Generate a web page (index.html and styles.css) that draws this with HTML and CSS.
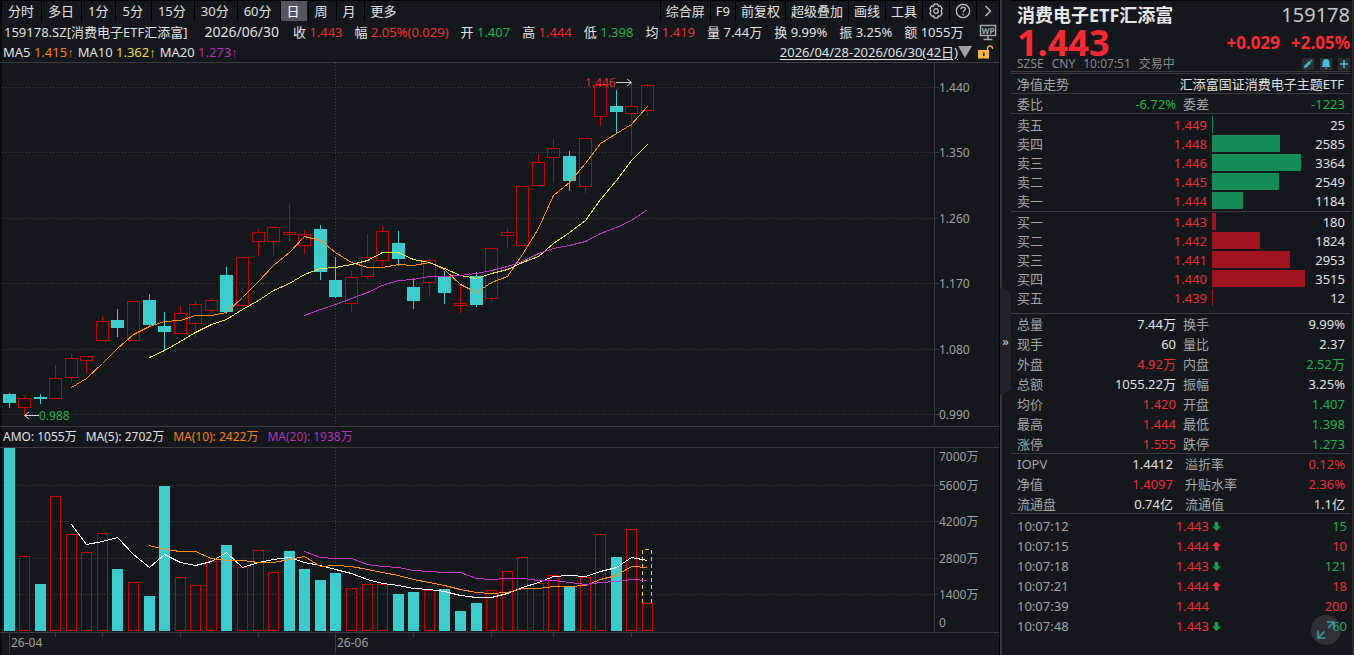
FILE: index.html
```
<!DOCTYPE html>
<html lang="zh-CN">

<head>
    <meta charset="UTF-8">
    <meta name="viewport" content="width=device-width, initial-scale=1.0">
    <title>消费电子ETF汇添富 159178</title>
    <link rel="stylesheet" href="styles.css">
</head>

<body>
    <main class="chart-panel">
        <nav class="toolbar">
            <button class="period">分时</button>
            <button class="period">多日</button>
            <button class="period">1分</button>
            <button class="period">5分</button>
            <button class="period">15分</button>
            <button class="period">30分</button>
            <button class="period">60分</button>
            <button class="period active">日</button>
            <button class="period">周</button>
            <button class="period">月</button>
            <button class="period">更多</button>
            <span class="spacer"></span>
            <button class="tool">综合屏</button>
            <button class="tool">F9</button>
            <button class="tool">前复权</button>
            <button class="tool">超级叠加</button>
            <button class="tool">画线</button>
            <button class="tool">工具</button>
            <button class="tool" aria-label="设置">
                <svg width="16" height="16" viewBox="0 0 16 16" fill="none" stroke="#c8c8c8" stroke-width="1.2">
                    <path d="M6.3 1.2h3.4l.7 1.9 1.9-.2 1.9 2.9-1.2 2.2 1.2 2.2-1.9 2.9-1.9-.2-.7 1.9H6.3l-.7-1.9-1.9.2-1.9-2.9L3 8 1.8 5.8l1.9-2.9 1.9.2z" />
                    <circle cx="8" cy="8" r="2.3" />
                </svg>
            </button>
            <button class="tool" aria-label="帮助">
                <svg width="16" height="16" viewBox="0 0 16 16" fill="none" stroke="#c8c8c8" stroke-width="1.2">
                    <circle cx="8" cy="8" r="6.7" />
                    <path d="M5.8 6.3c0-3 4.5-2.8 4.5-.2 0 1.5-2.2 1.6-2.2 3.3M8.1 10.8v1.4" />
                </svg>
            </button>
            <button class="tool" aria-label="展开">
                <svg width="12" height="16" viewBox="2 0 12 16" fill="none" stroke="#c8c8c8" stroke-width="1.3">
                    <path d="M5.5 3l5 5-5 5" />
                </svg>
            </button>
        </nav>

        <div class="quote">
            <span>159178.SZ[消费电子ETF汇添富]</span>
            <span class="date">2026/06/30</span>
            <span>收 <b class="red">1.443</b></span>
            <span>幅 <b class="red">2.05%(0.029)</b></span>
            <span>开 <b class="green">1.407</b></span>
            <span>高 <b class="red">1.444</b></span>
            <span>低 <b class="green">1.398</b></span>
            <span>均 <b class="red">1.419</b></span>
            <span>量 <b>7.44万</b></span>
            <span>换 <b>9.99%</b></span>
            <span>振 <b>3.25%</b></span>
            <span>额 <b>1055万</b></span>
            <svg class="wp" width="18" height="17" viewBox="0 0 18 17">
                <path d="M1.5 1.5h15v10h-15zM9 12v3M4.5 15.5h9" fill="none" stroke="#a8a8a8" stroke-width="1.5" />
                <text x="9" y="9.5" text-anchor="middle" class="wp-text">WP</text>
            </svg>
        </div>

        <div class="averages">
            <span>MA5 <b class="orange">1.415↑</b></span>
            <span>MA10 <b class="yellow">1.362↑</b></span>
            <span>MA20 <b class="purple">1.273↑</b></span>
            <span class="spacer"></span>
            <a href="#" class="range">2026/04/28-2026/06/30(42日)</a>
            <svg width="14" height="12" viewBox="0 0 14 12">
                <path d="M0 0h14L7 12z" fill="#a0a0a0" />
            </svg>
            <svg class="lock" width="16" height="14" viewBox="0 0 16 14">
                <path d="M9.5 5V3.5a2.5 2.5 0 0 1 5 0V4" fill="none" stroke="#f0b030" stroke-width="1.3" />
                <path d="M0 5h11v8.5H0z" fill="#f5b83d" />
                <path d="M5 7.5h1.5v3.5H5z" fill="#14171b" />
            </svg>
        </div>

        <div class="plot price-plot">
            <svg id="price" class="canvas"></svg>
            <svg id="price-axis" class="axis"></svg>
        </div>

        <div class="legend">
            <span>AMO: 1055万</span>
            <span>MA(5): 2702万</span>
            <span class="orange">MA(10): 2422万</span>
            <span class="purple">MA(20): 1938万</span>
        </div>

        <div class="plot amount-plot">
            <svg id="amount" class="canvas"></svg>
            <svg id="amount-axis" class="axis"></svg>
        </div>
        <svg id="time" class="time-axis"></svg>
    </main>

    <aside class="side">
        <button class="collapse" aria-label="收起">»</button>

        <header class="summary">
            <div class="line">
                <h1>消费电子ETF汇添富</h1>
                <span class="code">159178</span>
            </div>
            <div class="line price-line">
                <span class="last">1.443</span>
                <span class="change">+0.029</span>
                <span class="change">+2.05%</span>
            </div>
            <div class="line market">
                <span>SZSE</span>
                <span>CNY</span>
                <span>10:07:51</span>
                <span>交易中</span>
                <span class="spacer"></span>
                <button class="mini" aria-label="编辑">
                    <svg width="12" height="12" viewBox="0 0 12 12">
                        <path d="M2 10l.6-2.5 4.7-4.7 1.9 1.9-4.7 4.7zM8 2.2l.8-.8 1.9 1.9-.8.8z" fill="#3bbfd8" />
                    </svg>
                </button>
                <button class="mini" aria-label="提醒">
                    <svg width="12" height="12" viewBox="0 0 12 12">
                        <path d="M6 1C3.500 1 2.500 3 2.500 5v2.500L1.500 9h9l-1-1.500V5C9.500 3 8.500 1 6 1zM4.500 9.700h3L6 11z" fill="#3bbfd8" />
                    </svg>
                </button>
                <button class="mini" aria-label="添加">
                    <svg width="12" height="12" viewBox="0 0 12 12">
                        <path d="M6 2v8M2 6h8" stroke="#3bbfd8" stroke-width="1.5" />
                    </svg>
                </button>
            </div>
        </header>

        <div class="line row">
            <span class="label">净值走势</span>
            <a href="#" class="fund">汇添富国证消费电子主题ETF</a>
        </div>

        <table class="stats ratio">
            <tr><th>委比</th><td class="green">-6.72%</td><th>委差</th><td class="green">-1223</td></tr>
        </table>

        <table class="book sell">
            <tr><th>卖五</th><td class="price">1.449</td><td class="depth"><i style="width: 1%"></i></td><td>25</td></tr>
            <tr><th>卖四</th><td class="price">1.448</td><td class="depth"><i style="width: 73%"></i></td><td>2585</td></tr>
            <tr><th>卖三</th><td class="price">1.446</td><td class="depth"><i style="width: 96%"></i></td><td>3364</td></tr>
            <tr><th>卖二</th><td class="price">1.445</td><td class="depth"><i style="width: 72%"></i></td><td>2549</td></tr>
            <tr><th>卖一</th><td class="price">1.444</td><td class="depth"><i style="width: 33%"></i></td><td>1184</td></tr>
        </table>

        <table class="book buy">
            <tr><th>买一</th><td class="price">1.443</td><td class="depth"><i style="width: 4%"></i></td><td>180</td></tr>
            <tr><th>买二</th><td class="price">1.442</td><td class="depth"><i style="width: 52%"></i></td><td>1824</td></tr>
            <tr><th>买三</th><td class="price">1.441</td><td class="depth"><i style="width: 84%"></i></td><td>2953</td></tr>
            <tr><th>买四</th><td class="price">1.440</td><td class="depth"><i style="width: 100%"></i></td><td>3515</td></tr>
            <tr><th>买五</th><td class="price">1.439</td><td class="depth"><i style="width: 1%"></i></td><td>12</td></tr>
        </table>

        <table class="stats">
            <tr><th>总量</th><td>7.44万</td><th>换手</th><td>9.99%</td></tr>
            <tr><th>现手</th><td>60</td><th>量比</th><td>2.37</td></tr>
            <tr><th>外盘</th><td class="red">4.92万</td><th>内盘</th><td class="green">2.52万</td></tr>
            <tr><th>总额</th><td>1055.22万</td><th>振幅</th><td>3.25%</td></tr>
            <tr><th>均价</th><td class="red">1.420</td><th>开盘</th><td class="green">1.407</td></tr>
            <tr><th>最高</th><td class="red">1.444</td><th>最低</th><td class="green">1.398</td></tr>
            <tr><th>涨停</th><td class="red">1.555</td><th>跌停</th><td class="green">1.273</td></tr>
        </table>

        <table class="stats fund-stats">
            <tr><th>IOPV</th><td>1.4412</td><th>溢折率</th><td class="red">0.12%</td></tr>
            <tr><th>净值</th><td class="red">1.4097</td><th>升贴水率</th><td class="red">2.36%</td></tr>
            <tr><th>流通盘</th><td>0.74亿</td><th>流通值</th><td>1.1亿</td></tr>
        </table>

        <table class="ticks">
            <tr><th>10:07:12</th><td class="red">1.443</td><td class="dir down"></td><td class="green">15</td></tr>
            <tr><th>10:07:15</th><td class="red">1.444</td><td class="dir up"></td><td class="red">10</td></tr>
            <tr><th>10:07:18</th><td class="red">1.443</td><td class="dir down"></td><td class="green">121</td></tr>
            <tr><th>10:07:21</th><td class="red">1.444</td><td class="dir up"></td><td class="red">18</td></tr>
            <tr><th>10:07:39</th><td class="red">1.444</td><td class="dir"></td><td class="red">200</td></tr>
            <tr><th>10:07:48</th><td class="red">1.443</td><td class="dir down"></td><td class="green">60</td></tr>
        </table>

        <button class="expand" aria-label="放大">
            <svg width="20" height="20" viewBox="0 0 20 20" fill="none" stroke="#2f9ca5" stroke-width="1.6">
                <path d="M12 8l5.500-5.500M11 2h7v7M8.500 11.500L3 17M2 10.500V18h7.500" />
            </svg>
        </button>
    </aside>

    <script src="chart.js"></script>
</body>

</html>
```

FILE: styles.css
```
* {
    margin: 0;
    padding: 0;
    box-sizing: border-box;
}

body {
    display: flex;
    height: 100vh;
    min-height: 655px;
    overflow: hidden;
    background-color: #14171b;
    color: #e1e1e1;
    font-family: "Noto Sans", "Liberation Sans", "Noto Sans CJK SC", sans-serif;
    font-size: 13px;
    line-height: 18px;
}

b,
th,
i {
    font-weight: normal;
    font-style: normal;
}

button {
    border: none;
    background: none;
    color: inherit;
    font: inherit;
    cursor: pointer;
}

a {
    color: inherit;
    text-decoration: none;
}

svg {
    display: block;
    flex: none;
}

.spacer {
    flex: 1;
}

.red {
    color: #f02b32;
}

.green {
    color: #1fb14c;
}

.orange {
    color: #f5820a;
}

.yellow {
    color: #e6dc2d;
}

.purple {
    color: #b432b9;
}

/* chart side */
.chart-panel {
    flex: 1;
    min-width: 0;
    display: flex;
    flex-direction: column;
    border-right: 1px solid #000;
    box-shadow: inset 2px 0 #0a0b0d;
}

.toolbar {
    display: flex;
    height: 21px;
    padding-left: 1px;
    border-top: 1px solid #000;
    white-space: nowrap;
}

.toolbar button {
    display: flex;
    align-items: center;
    border-left: 1px solid #000;
}

.toolbar .period {
    padding: 0 6px;
    margin-right: 1px;
}

.toolbar .period:nth-child(n+4) {
    padding: 0 7px 0 6px;
}

.toolbar .tool {
    padding: 0 5px;
}

.toolbar .active {
    background-color: #55545f;
    color: #fff;
}

.quote {
    display: flex;
    align-items: center;
    gap: 12px;
    height: 22px;
    padding: 0 2px 0 4px;
    white-space: nowrap;
}

.quote .date {
    margin: 0 2px 0 5px;
    font-size: 14px;
}

.wp {
    margin-left: auto;
}

.wp-text {
    fill: #a8a8a8;
    font-size: 8px;
    font-weight: bold;
}

.averages {
    display: flex;
    align-items: center;
    gap: 4px;
    height: 20px;
    padding: 0 5px 2px 3px;
    border-bottom: 1px solid #3a3a40;
    white-space: nowrap;
}

.range {
    text-decoration: underline;
    text-underline-offset: 2px;
    margin-right: -4px;
}

.lock {
    margin-left: 2px;
}

.plot {
    display: flex;
}

.price-plot {
    flex: 363;
    border-bottom: 1px solid #3a3a40;
}

.amount-plot {
    flex: 184;
    border-bottom: 1px solid #3a3a40;
}

.canvas {
    flex: 1;
    min-width: 0;
    height: 100%;
}

.axis {
    width: 65px;
    height: 100%;
    border-left: 1px solid #3a3a40;
}

.time-axis {
    width: 100%;
    height: 22px;
}

.legend {
    display: flex;
    align-items: center;
    gap: 9px;
    height: 21px;
    padding-left: 3px;
    border-bottom: 1px solid #3a3a40;
    font-size: 12px;
}

/* chart drawing */
.grid {
    stroke: #3c3e42;
    stroke-dasharray: 1 2;
    shape-rendering: crispEdges;
}

.tick {
    stroke: #3a3a40;
    shape-rendering: crispEdges;
}

.rise {
    fill: none;
    stroke: #c80000;
    shape-rendering: crispEdges;
}

.fall {
    fill: #3bcdcd;
    stroke: #3bcdcd;
    shape-rendering: crispEdges;
}

.forecast {
    fill: none;
    stroke: #ffc81e;
    stroke-dasharray: 4 3;
    shape-rendering: crispEdges;
}

.curve {
    fill: none;
    shape-rendering: crispEdges;
}

.pointer {
    fill: none;
    stroke: #d2d2d2;
}

.axis-text {
    fill: #a0a0a0;
    font-size: 12px;
}

.high-text {
    fill: #dc2a32;
    font-size: 12px;
}

.low-text {
    fill: #1fb14c;
    font-size: 12px;
}

/* quote side */
.side {
    position: relative;
    flex: none;
    width: 354px;
    padding: 0 1px 0 9px;
    border-left: 2px solid #34343a;
    border-right: 2px solid #2a2a30;
}

.line {
    display: flex;
    align-items: center;
}

.summary {
    height: 74px;
    padding: 0 1px 0 6px;
    border-top: 1px solid #000;
    border-bottom: 3px double #3a3a40;
}

.summary h1 {
    flex: 1;
    color: #e6e6e6;
    font-size: 18px;
    line-height: 28px;
}

.code {
    color: #c8c8c8;
    font-size: 20px;
    line-height: 28px;
}

.price-line {
    height: 28px;
    gap: 11px;
    color: #ff2830;
    font-weight: bold;
}

.last {
    flex: 1;
    font-size: 36px;
    line-height: 28px;
}

.change {
    font-size: 17px;
    line-height: 24px;
}

.market {
    height: 14px;
    gap: 8px;
    color: #8c8c8c;
    font-size: 12px;
    line-height: 14px;
}

.mini {
    width: 12px;
    height: 12px;
    background-color: #2c2d33;
}

.mini + .mini {
    margin-left: -2px;
}

.row {
    justify-content: space-between;
    height: 20px;
    padding: 0 7px 0 6px;
    border-bottom: 1px solid #3a3a40;
}

.label {
    color: #a5a5a5;
}

table {
    width: 100%;
    table-layout: fixed;
    border-collapse: separate;
    border-spacing: 0;
    border-bottom: 1px solid #3a3a40;
}

th {
    color: #a5a5a5;
    text-align: left;
    white-space: nowrap;
}

td {
    text-align: right;
    white-space: nowrap;
}

.stats tr {
    height: 20px;
}

.stats tr:last-child {
    height: 19px;
}

.stats th:first-child {
    width: 60px;
    padding-left: 6px;
}

.stats th:nth-child(3) {
    width: 80px;
    padding-left: 7px;
}

.stats td:nth-child(2) {
    width: 105px;
}

.stats td:last-child {
    padding-right: 6px;
}

.fund-stats td:nth-child(2) {
    padding-right: 3px;
}

.fund-stats th:nth-child(3) {
    padding-left: 9px;
}

.book tr {
    height: 19px;
}

.book th {
    width: 60px;
    padding-left: 6px;
}

.book .price {
    width: 136px;
    color: #f02b32;
}

.book .depth {
    width: 98px;
    padding-left: 5px;
}

.depth i {
    display: block;
    height: 17px;
}

.book td:last-child {
    padding-right: 6px;
}

.sell {
    padding: 1px 0;
}

.sell i {
    background-color: #148c5a;
}

.buy {
    padding-bottom: 6px;
}

.buy i {
    background-color: #a0141e;
}

.ticks {
    padding-top: 2px;
    border-bottom: none;
}

.ticks tr {
    height: 20px;
}

.ticks th {
    width: 98px;
    padding-left: 6px;
}

.ticks td:nth-child(2) {
    width: 100px;
}

.ticks td:last-child {
    padding-right: 4px;
}

.ticks .dir {
    width: 20px;
}

.dir::before {
    display: block;
    width: 9px;
    height: 9px;
    margin-left: 3px;
    clip-path: polygon(50% 0, 100% 50%, 70% 50%, 70% 100%, 30% 100%, 30% 50%, 0 50%);
}

.up::before {
    content: "";
    background-color: #ff2830;
}

.down::before {
    content: "";
    background-color: #14a046;
    transform: rotate(180deg);
}

.collapse {
    position: absolute;
    left: -2px;
    top: 287px;
    width: 11px;
    height: 108px;
    background-color: #232228;
    color: #c8c8c8;
    clip-path: polygon(0 0, 100% 5%, 100% 95%, 0 100%);
}

.expand {
    position: absolute;
    right: 11px;
    bottom: 10px;
    display: flex;
    align-items: center;
    justify-content: center;
    width: 30px;
    height: 30px;
    border-radius: 50%;
    background-color: rgba(90, 90, 95, .4);
}
```

FILE: chart.js
```
const START = 9;
const STEP = 15.57;
const PRICE_TOP = 63;
const AMOUNT_TOP = 448;
const AMOUNT_BASE = 631;

// direction, high, body top, body bottom, low
const candles = [
    ["d", 393, 394, 403, 408], ["u", 396, 398, 407, 415], ["d", 394, 397, 399, 404],
    ["u", 365, 378, 398, 398], ["u", 354, 358, 377, 382], ["u", 356, 356, 360, 373],
    ["u", 316, 321, 340, 340], ["d", 309, 320, 328, 337], ["u", 301, 301, 340, 340],
    ["d", 294, 300, 325, 326], ["d", 312, 326, 332, 350], ["u", 306, 313, 333, 333],
    ["u", 301, 304, 323, 338], ["u", 298, 300, 310, 313], ["d", 267, 275, 312, 314],
    ["u", 257, 257, 305, 305], ["u", 229, 232, 241, 256], ["u", 227, 227, 241, 256],
    ["u", 204, 232, 234, 242], ["u", 230, 234, 245, 254], ["d", 225, 229, 272, 280],
    ["d", 257, 280, 297, 298], ["u", 271, 277, 303, 312], ["u", 234, 257, 276, 279],
    ["u", 226, 231, 260, 267], ["d", 231, 243, 259, 266], ["d", 278, 287, 301, 309],
    ["u", 259, 260, 282, 297], ["d", 271, 276, 293, 304], ["u", 285, 303, 305, 313],
    ["d", 272, 276, 305, 307], ["u", 248, 248, 298, 302], ["u", 228, 232, 235, 248],
    ["u", 186, 186, 245, 245], ["u", 154, 162, 185, 185], ["u", 139, 148, 157, 183],
    ["d", 151, 156, 181, 191], ["u", 138, 138, 186, 193], ["u", 85, 85, 116, 126],
    ["d", 90, 106, 112, 134], ["u", 82, 106, 113, 156], ["u", 84, 85, 110, 116]
];

const priceLines = [
    { from: 4, color: "#ff8c14", ys: [387, 378, 363, 348, 334, 326, 321, 320, 315, 315, 312, 297, 281, 265, 252, 236, 240, 252, 262, 267, 267, 264, 265, 262, 269, 284, 292, 282, 276, 254, 228, 195, 182, 163, 143, 133, 124, 106] },
    { from: 9, color: "#ebe13c", ys: [357, 350, 341, 332, 324, 319, 309, 300, 290, 283, 274, 268, 267, 264, 260, 252, 252, 259, 262, 268, 275, 278, 273, 269, 262, 256, 243, 232, 220, 199, 180, 160, 144] },
    { from: 19, color: "#c332c3", ys: [315, 309, 304, 298, 292, 285, 280, 279, 276, 276, 275, 273, 270, 266, 261, 253, 248, 245, 241, 233, 227, 220, 209] }
];

const amounts = [
    ["d", 448], ["u", 556], ["d", 584], ["u", 496], ["u", 534], ["u", 552], ["u", 533],
    ["d", 569], ["u", 582], ["d", 596], ["d", 486], ["u", 577], ["u", 585], ["u", 561],
    ["d", 545], ["u", 567], ["u", 550], ["u", 572], ["d", 551], ["d", 569], ["d", 580],
    ["d", 573], ["u", 588], ["u", 584], ["u", 584], ["d", 594], ["d", 592], ["u", 590],
    ["d", 589], ["d", 611], ["d", 603], ["u", 590], ["u", 571], ["u", 557], ["u", 583],
    ["u", 575], ["d", 587], ["u", 577], ["u", 534], ["d", 557], ["u", 529], ["u", 603]
];

const amountLines = [
    { from: 4, color: "#ffffff", ys: [524, 544, 541, 537, 554, 567, 554, 562, 565, 561, 552, 567, 562, 559, 557, 562, 565, 569, 573, 579, 583, 585, 588, 589, 591, 595, 597, 597, 593, 587, 582, 576, 575, 576, 571, 567, 557, 560] },
    { from: 9, color: "#ff8c14", ys: [545, 549, 551, 551, 558, 560, 560, 562, 562, 559, 556, 566, 565, 566, 569, 572, 575, 579, 582, 585, 589, 592, 593, 592, 588, 588, 586, 586, 585, 579, 575, 566, 567] },
    { from: 19, color: "#c332c3", ys: [551, 557, 558, 558, 564, 566, 567, 570, 571, 572, 572, 578, 579, 578, 578, 580, 580, 582, 584, 582, 581, 579, 580] }
];

const priceMarks = [["1.440", 87], ["1.350", 152], ["1.260", 218], ["1.170", 283], ["1.080", 349], ["0.990", 414]];
const amountMarks = [["5600万", 485], ["4200万", 521], ["2800万", 558], ["1400万", 594]];

function xAt(i) {
    return Math.floor(START + STEP * i) + 0.5;
}

function line(cls, x1, y1, x2, y2) {
    return `<line class="${cls}" x1="${x1}" y1="${y1}" x2="${x2}" y2="${y2}"/>`;
}

function text(cls, x, y, value) {
    return `<text class="${cls}" x="${x}" y="${y}">${value}</text>`;
}

function box(dir, x, half, top, bottom) {
    return `<rect class="${dir === "u" ? "rise" : "fall"}" x="${x - half}" y="${top}" width="${half * 2}" height="${bottom - top}"/>`;
}

function curve(item, top) {
    let points = item.ys.map((y, k) => `${xAt(item.from + k)},${y - top + 0.5}`).join(" ");
    return `<polyline class="curve" stroke="${item.color}" points="${points}"/>`;
}

function drawPrice() {
    let out = "";
    let axis = "";
    priceMarks.forEach(([label, y]) => {
        let py = y - PRICE_TOP + 0.5;
        out += line("grid", 2, py, "100%", py);
        axis += line("tick", 0, py, 4, py) + text("axis-text", 4, py + 4.5, label);
    });
    out += line("grid", xAt(21), 0, xAt(21), "100%");

    candles.forEach(([dir, high, top, bottom, low], i) => {
        let x = xAt(i);
        let cls = dir === "u" ? "rise" : "fall";
        // falling bodies are given by their outer edge
        let end = dir === "u" ? bottom : bottom - 1;
        if (high < top) out += line(cls, x, high - PRICE_TOP, x, top - PRICE_TOP);
        if (low > bottom) out += line(cls, x, bottom - PRICE_TOP, x, low - PRICE_TOP);
        out += box(dir, x, 6, top - PRICE_TOP + 0.5, end - PRICE_TOP + 0.5);
    });
    priceLines.forEach(item => out += curve(item, PRICE_TOP));

    out += text("high-text", 585, 24, "1.446");
    out += `<path class="pointer" d="M616 19.5h15M627 16l4.5 3.5-4.5 3.5"/>`;
    out += text("low-text", 39, 357, "0.988");
    out += `<path class="pointer" d="M39 352.5H25M29 349l-4.5 3.5 4.5 3.5"/>`;

    document.querySelector("#price").innerHTML = out;
    document.querySelector("#price-axis").innerHTML = axis;
}

function drawAmount() {
    let out = "";
    let axis = text("axis-text", 4, 13, "7000万") + text("axis-text", 4, 179, "0");
    amountMarks.forEach(([label, y]) => {
        let py = y - AMOUNT_TOP + 0.5;
        out += line("grid", 2, py, "100%", py);
        axis += line("tick", 0, py, 4, py) + text("axis-text", 4, py + 4.5, label);
    });
    out += line("grid", xAt(21), 0, xAt(21), "100%");

    amounts.forEach(([dir, top], i) => {
        out += box(dir, xAt(i), 5, top - AMOUNT_TOP + 0.5, AMOUNT_BASE - AMOUNT_TOP - 0.5);
    });
    out += `<path class="forecast" d="M642.5 155V101.5h9V155"/>`;
    amountLines.forEach(item => out += curve(item, AMOUNT_TOP));

    document.querySelector("#amount").innerHTML = out;
    document.querySelector("#amount-axis").innerHTML = axis;
}

function drawTime() {
    let out = "";
    [3, 6, 11, 16, 26, 31, 35, 40].forEach(i => out += line("tick", xAt(i), 0, xAt(i), 4));
    [[0, "26-04"], [21, "26-06"]].forEach(([i, label]) => {
        out += line("tick", xAt(i), 0, xAt(i), 20) + text("axis-text", xAt(i) + 1.5, 14, label);
    });
    document.querySelector("#time").innerHTML = out;
}

drawPrice();
drawAmount();
drawTime();
```
